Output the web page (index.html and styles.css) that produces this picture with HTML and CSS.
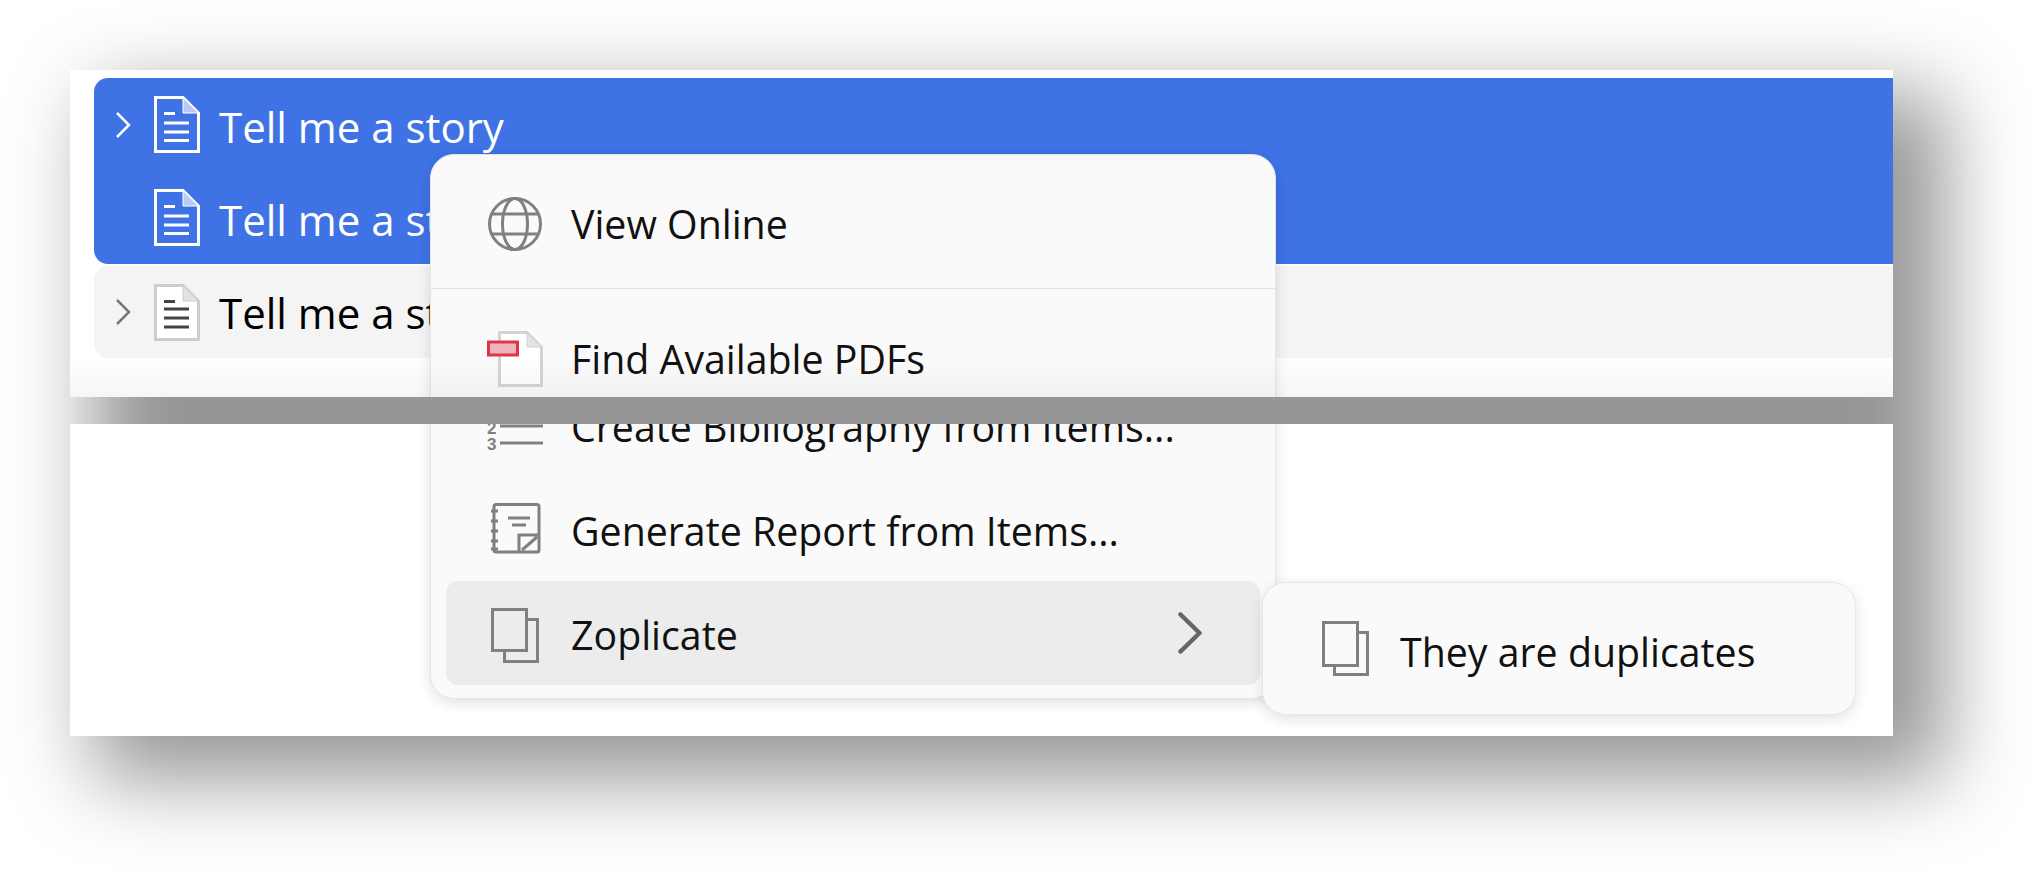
FILE: index.html
```html
<!DOCTYPE html>
<html lang="en">
<head>
<meta charset="utf-8">
<title>Zoplicate menu</title>
<link rel="stylesheet" href="styles.css">
</head>
<body>
<main class="stage">
  <div class="backdrop"></div>
  <section class="shot shot-top">
    <div class="tree">
      <div class="selection">
        <div class="row">
          <svg class="twisty" viewBox="0 0 16 28"><path d="M2 2 L14 14 L2 26"/></svg>
          <svg class="doc" viewBox="0 0 46 57"><path class="doc-page" d="M1.5 1.5H29L44.5 17V55.5H1.5Z"/><path class="doc-fold" d="M29 1.5V17H44.5Z"/><path class="doc-lines" d="M10 17.5H21M10 27H35M10 36H35M10 44.5H35"/></svg>
          <span class="title">Tell me a story</span>
        </div>
        <div class="row">
          <span class="twisty-slot"></span>
          <svg class="doc" viewBox="0 0 46 57"><path class="doc-page" d="M1.5 1.5H29L44.5 17V55.5H1.5Z"/><path class="doc-fold" d="M29 1.5V17H44.5Z"/><path class="doc-lines" d="M10 17.5H21M10 27H35M10 36H35M10 44.5H35"/></svg>
          <span class="title">Tell me a story</span>
        </div>
      </div>
      <div class="row row-plain">
        <svg class="twisty" viewBox="0 0 16 28"><path d="M2 2 L14 14 L2 26"/></svg>
        <svg class="doc" viewBox="0 0 46 57"><path class="doc-page" d="M1.5 1.5H29L44.5 17V55.5H1.5Z"/><path class="doc-fold" d="M29 1.5V17H44.5Z"/><path class="doc-lines" d="M10 17.5H21M10 25H35M10 34H35M10 43H35"/></svg>
        <span class="title">Tell me a story</span>
      </div>
    </div>
    <div class="menu menu-upper">
      <div class="item">
        <svg class="icon" viewBox="0 0 56 56"><g class="ink"><circle cx="28" cy="28" r="25.5"/><ellipse cx="28" cy="28" rx="12.5" ry="25.5"/><path d="M4 18H52M4 38H52"/></g></svg>
        <span class="label">View Online</span>
      </div>
      <div class="separator"></div>
      <div class="item">
        <svg class="icon" viewBox="0 0 56 56"><path class="pdf-page" d="M12.500 1.500H40L54.500 16V54.500H12.500Z"/><path class="pdf-fold" d="M40 1.500V16H54.500Z"/><rect class="pdf-tag" x="1.500" y="11" width="29" height="13"/></svg>
        <span class="label">Find Available PDFs</span>
      </div>
    </div>
  </section>
  <section class="shot shot-bottom">
    <div class="menu menu-lower">
      <div class="item">
        <svg class="icon" viewBox="0 0 56 56"><g class="ink"><path d="M13 12H56M13 29H56M13 46H56"/></g><text class="num" x="0" y="37">2</text><text class="num" x="0" y="53">3</text></svg>
        <span class="label">Create Bibliography from Items...</span>
      </div>
      <div class="item">
        <svg class="icon" viewBox="0 0 56 56"><g class="ink"><path d="M9 3.500H50a2 2 0 0 1 2 2V49a2 2 0 0 1-2 2H9a2 2 0 0 1-2-2V5.500a2 2 0 0 1 2-2Z"/><path d="M4 10H11M4 20H11M4 30H11M4 40H11M4 48H11"/><path d="M21 17H43M25 24H39"/><path d="M32 51V34H52M35 49L50 36"/></g></svg>
        <span class="label">Generate Report from Items...</span>
      </div>
      <div class="item item-active">
        <svg class="icon" viewBox="0 0 56 56"><g class="ink"><path d="M5.500 4.500H39.500V45.500H5.500Z"/><path d="M39.500 14.500H50.500V56.500H17.500V45.500"/></g></svg>
        <span class="label">Zoplicate</span>
        <svg class="arrow" viewBox="0 0 24 42"><path d="M2.500 2.500 L21.500 21 L2.500 39.500"/></svg>
      </div>
    </div>
    <div class="submenu">
      <svg class="sub-icon" viewBox="0 0 47 55"><g class="ink"><path d="M1.500 1.500H35.500V44.500H1.500Z"/><path d="M35.500 11.500H45.500V53.500H12.500V44.500"/></g></svg>
      <span class="label">They are duplicates</span>
    </div>
  </section>
</main>
</body>
</html>
```
FILE: styles.css
```css
* { box-sizing: border-box; }
html, body { margin: 0; background: #fff; }
body { width: 2035px; height: 878px; overflow: hidden; font-family: "Open Sans", "Noto Sans", sans-serif; }

.stage { position: relative; display: flex; flex-direction: column; gap: 27px; width: 1823px; margin: 70px 0 0 70px; }

.backdrop { position: absolute; left: 23px; top: 23px; width: 1852px; height: 687px; background: rgba(0,0,0,.41); filter: blur(41px); }

.shot { position: relative; overflow: hidden; background: #fff; width: 1823px; }
.shot-top { height: 327px; padding: 8px 0 0 24px; }
.shot-bottom { height: 312px; }
.shot-top::after { content: ""; position: absolute; left: 0; right: 0; bottom: 0; height: 40px; background: linear-gradient(rgba(0,0,0,0), rgba(0,0,0,.035)); }

.selection { background: #3f72e5; color: #fff; border-radius: 14px 0 0 14px; }
.selection .title { padding-top: 4px; }
.row { display: flex; align-items: center; height: 93px; padding-left: 21px; font-size: 42px; }
.row-plain { margin-top: 2px; height: 92px; background: #f4f4f4; color: #000; border-radius: 14px 0 0 14px; }

.twisty { width: 16px; height: 28px; fill: none; stroke: #fff; stroke-width: 2.500; flex: none; }
.twisty-slot { width: 16px; flex: none; }
.doc { width: 46px; height: 57px; margin-left: 23px; flex: none; fill: none; }
.title { margin-left: 19px; white-space: nowrap; }

.doc-page { stroke: #fff; stroke-width: 3; }
.doc-fold { fill: #b9cbf3; stroke: #fff; stroke-width: 1; }
.doc-lines { stroke: #fff; stroke-width: 3; }

.row-plain .twisty { stroke: #777; }
.row-plain .doc-page { fill: #fff; stroke: #cdcdcd; }
.row-plain .doc-fold { fill: #e2e2e2; stroke: #cdcdcd; }
.row-plain .doc-lines { stroke: #444; }

.menu { position: absolute; left: 360px; width: 846px; background: #fafafa; border: 1px solid #e4e4e4; border-radius: 24px; box-shadow: 0 4px 14px rgba(0,0,0,.12); padding: 17px 15px 13px 15px; color: #111; }
.menu-upper { top: 84px; height: 400px; }
.menu-lower { bottom: 37px; height: 500px; display: flex; flex-direction: column; justify-content: flex-end; }
.menu-lower .label { padding-top: 4px; }

.item { display: flex; align-items: center; height: 104px; padding: 0 58px 0 41px; border-radius: 12px; flex: none; }
.item-active { background: #ececec; }
.separator { height: 1px; margin: 12px -15px 18px; background: #e2e2e2; }

.icon { width: 56px; height: 56px; flex: none; overflow: visible; }
.label { margin-left: 28px; font-size: 39.300px; white-space: nowrap; }
.ink { fill: none; stroke: #808080; stroke-width: 3; }
.num { font-family: "Liberation Sans", sans-serif; font-weight: 700; font-size: 17px; fill: #808080; }

.pdf-page { fill: #fff; stroke: #d4d4d4; stroke-width: 3; }
.pdf-fold { fill: #e2e2e2; stroke: #d4d4d4; stroke-width: 1; }
.pdf-tag { fill: #eeb4bb; stroke: #e0344b; stroke-width: 3; }

.arrow { width: 24px; height: 42px; margin-left: auto; fill: none; stroke: #666; stroke-width: 4.500; stroke-linecap: round; stroke-linejoin: round; flex: none; }

.submenu { position: absolute; left: 1192px; top: 158px; width: 594px; height: 133px; display: flex; align-items: center; padding-left: 59px; background: #fafafa; border: 1px solid #e6e6e6; border-radius: 24px; box-shadow: 0 4px 14px rgba(0,0,0,.12); color: #111; }
.sub-icon { width: 47px; height: 55px; flex: none; }
.submenu .label { margin-left: 31px; padding-top: 6px; }
```
